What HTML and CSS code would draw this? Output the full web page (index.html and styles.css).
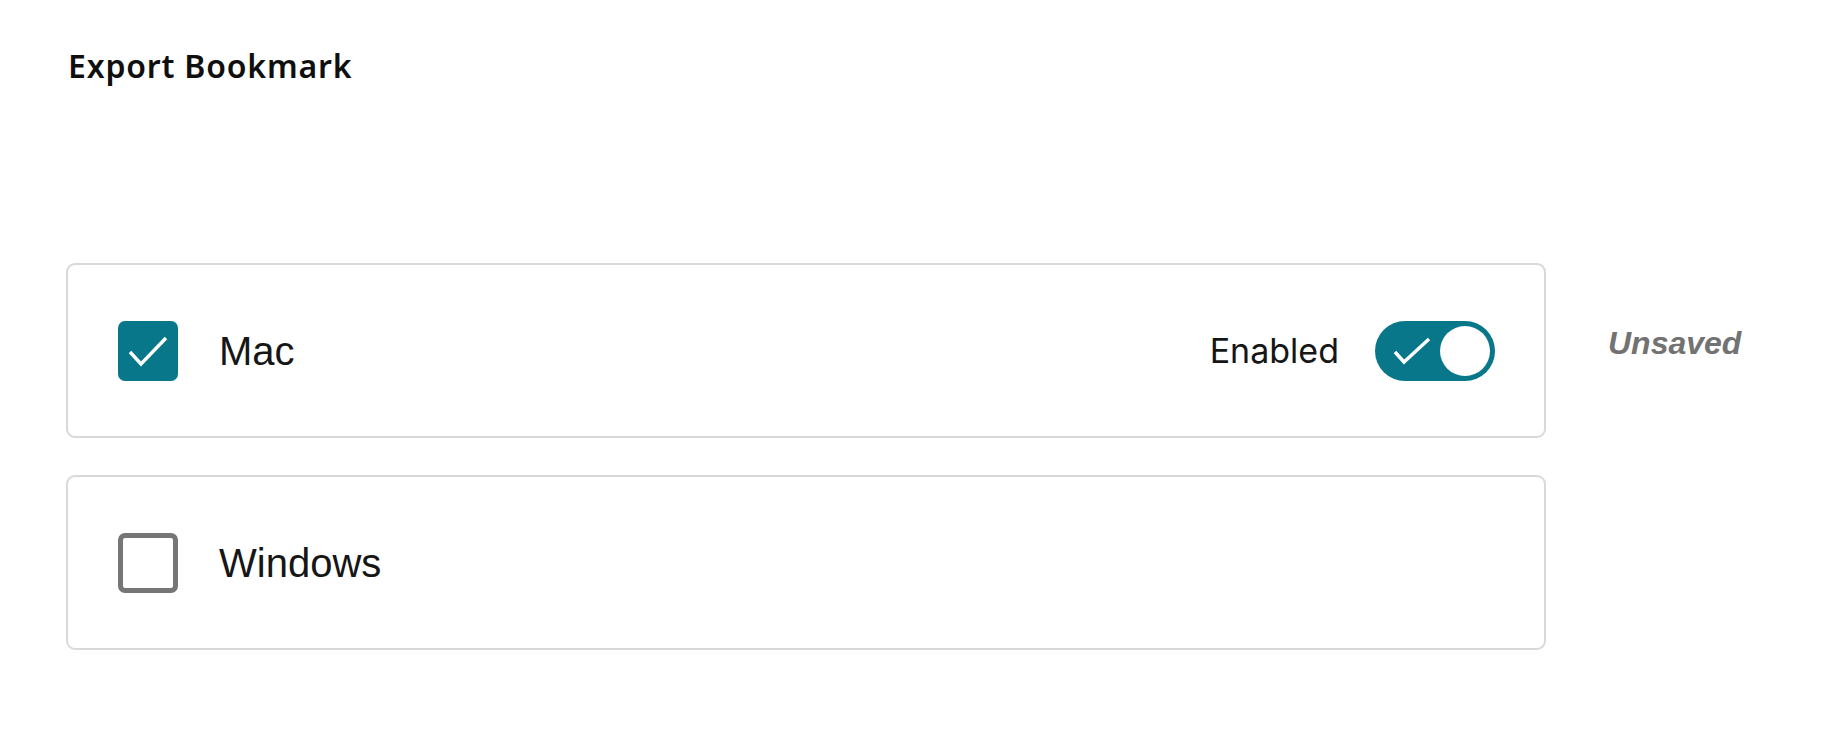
FILE: index.html
```html
<!DOCTYPE html>
<html>
<head>
<meta charset="utf-8">
<link rel="stylesheet" href="styles.css">
</head>
<body>
<div class="page">
  <h1 class="title">Export Bookmark</h1>
  <div class="rows">
    <div class="row">
      <div class="card">
        <span class="check checked">
          <svg viewBox="0 0 60 60" width="60" height="60"><path d="M12 31 L23 43 L48 17" fill="none" stroke="#fff" stroke-width="3.4"/></svg>
        </span>
        <span class="label">Mac</span>
        <div class="status">
          <span class="status-text">Enabled</span>
          <span class="toggle on">
            <svg class="toggle-tick" viewBox="0 0 40 30" width="40" height="30"><path d="M3 16 L12 26 L37 3" fill="none" stroke="#fff" stroke-width="3.4"/></svg>
            <span class="knob"></span>
          </span>
        </div>
      </div>
      <span class="note">Unsaved</span>
    </div>
    <div class="row">
      <div class="card">
        <span class="check"></span>
        <span class="label">Windows</span>
      </div>
    </div>
  </div>
</div>
</body>
</html>
```

FILE: styles.css
```css
html, body {
  margin: 0;
  padding: 0;
  background: #ffffff;
}

.page {
  padding: 46px 0 0 66px;
  font-family: "Liberation Sans", Arial, sans-serif;
  color: #161616;
}

.title {
  margin: 0 0 0 2px;
  font-family: "Noto Sans", Inter, sans-serif;
  font-weight: 600;
  font-size: 32px;
  letter-spacing: 0.8px;
  line-height: 40px;
  color: #0f0f0f;
}

.rows {
  margin-top: 177px;
  display: flex;
  flex-direction: column;
  gap: 37px;
}

.row {
  display: flex;
  align-items: flex-start;
}

.card {
  box-sizing: border-box;
  width: 1480px;
  height: 175px;
  border: 2px solid #d9d9d9;
  border-radius: 9px;
  padding: 0 49px 0 50px;
  display: flex;
  align-items: center;
}

.check {
  box-sizing: border-box;
  width: 60px;
  height: 60px;
  border-radius: 7px;
  border: 5px solid #767676;
  flex: none;
  display: block;
  position: relative;
}

.check.checked {
  border: none;
  background: #077789;
}

.check svg {
  display: block;
}

.label {
  margin-left: 41px;
  font-size: 40px;
  line-height: 46px;
  color: #161616;
}

.status {
  margin-left: auto;
  display: flex;
  align-items: center;
  gap: 36px;
}

.status-text {
  font-family: Inter, "Noto Sans", sans-serif;
  font-size: 34px;
  line-height: 40px;
  color: #161616;
}

.toggle {
  box-sizing: border-box;
  width: 120px;
  height: 60px;
  border-radius: 30px;
  background: #077789;
  display: flex;
  align-items: center;
  padding: 0 5px 0 17px;
  flex: none;
}

.toggle-tick {
  display: block;
}

.knob {
  margin-left: auto;
  width: 50px;
  height: 50px;
  border-radius: 50%;
  background: #ffffff;
}

.note {
  margin-left: 62px;
  margin-top: 60px;
  font-size: 32px;
  line-height: 40px;
  font-weight: bold;
  font-style: italic;
  color: #727272;
}
```
